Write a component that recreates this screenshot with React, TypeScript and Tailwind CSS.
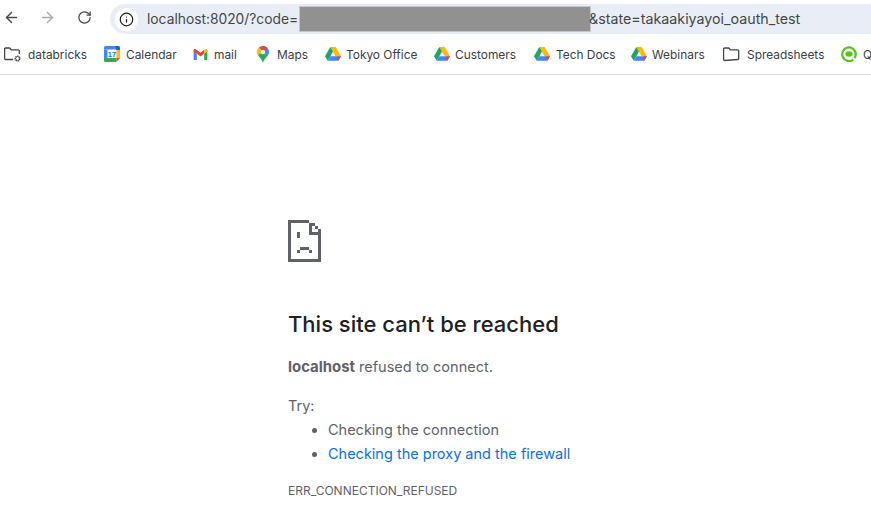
import { ArrowLeft, ArrowRight, Info, RotateCw } from "lucide-react";

const sans = "font-['Inter','Liberation_Sans',sans-serif]";

function DriveIcon() {
  return (
    <svg width="16" height="14" viewBox="0 0 16 14" className="shrink-0">
      <path d="M5.3 0h5.4L16 9.2h-5.400z" fill="#fbbc04" />
      <path d="M5.3 0L8 4.6 2.700 13.800 0 9.200z" fill="#1fa463" />
      <path d="M5.300 9.200H16l-2.700 4.600H2.700z" fill="#4285f4" />
      <path d="M12.800 9.200H16l-2.700 4.600-1.800-2.200z" fill="#ea4335" opacity="0.9" />
    </svg>
  );
}

function FolderIcon({ gear }: { gear?: boolean }) {
  return (
    <svg width="17" height="15" viewBox="0 0 17 15" fill="none" stroke="#444746" strokeWidth="1.3" className="shrink-0">
      <path d={gear ? "M9 12.500H1.600a1 1 0 0 1-1-1V2a1 1 0 0 1 1-1h4l1.700 1.800h7a1 1 0 0 1 1 1V7" : "M1.600 13.500a1 1 0 0 1-1-1V2a1 1 0 0 1 1-1h4l1.700 1.800h7.400a1 1 0 0 1 1 1v7.700a1 1 0 0 1-1 1z"} />
      {gear && <circle cx="13.500" cy="11.500" r="2.200" strokeWidth="1.600" strokeDasharray="1.400 .4" />}
    </svg>
  );
}

function CalendarIcon() {
  return (
    <svg width="16" height="16" viewBox="0 0 16 16" className="shrink-0">
      <rect width="16" height="16" rx="1.500" fill="#fff" />
      <path d="M0 3.500V1.500A1.500 1.500 0 0 1 1.500 0H12v3.500z" fill="#4285f4" />
      <path d="M12 0h2.500A1.500 1.500 0 0 1 16 1.500V4h-4z" fill="#1967d2" />
      <path d="M0 3.500h3.500V12H0z" fill="#4285f4" />
      <path d="M12.500 4H16v8h-3.500z" fill="#fbbc04" />
      <path d="M0 12h12.500v4H1.500A1.500 1.500 0 0 1 0 14.500z" fill="#34a853" />
      <path d="M12.500 12H16l-3.500 4z" fill="#ea4335" />
      <text x="8" y="11" fontSize="7.500" textAnchor="middle" fill="#1a73e8" fontWeight="700" fontFamily="Liberation Sans, sans-serif">17</text>
    </svg>
  );
}

function GmailIcon() {
  return (
    <svg width="15" height="11" viewBox="0 0 15 12" className="shrink-0">
      <path d="M0 1.500v9.300c0 .6.5 1.200 1.100 1.200h2.400V5.200z" fill="#4285f4" />
      <path d="M15 1.500v9.300c0 .6-.5 1.200-1.100 1.200h-2.400V5.200z" fill="#34a853" />
      <path d="M0 1.500C0 .3 1.400-.4 2.400.4L7.500 4.200l4-3v4L7.500 8.200 3.500 5.200 0 2.800z" fill="#ea4335" />
      <path d="M11.500 1.200l1.100-.8c1-.8 2.400-.1 2.400 1.100v1.300l-3.500 2.400z" fill="#fbbc04" />
    </svg>
  );
}

function MapsIcon() {
  return (
    <svg width="12" height="17" viewBox="0 0 12 17" className="shrink-0">
      <path d="M6 0a6 6 0 0 1 6 6c0 1-.3 2-.8 2.900L6 6z" fill="#4285f4" />
      <path d="M1.800 1.700A6 6 0 0 1 6 0a6 6 0 0 1 4.300 1.800L6 6z" fill="#ea4335" />
      <path d="M.8 9A6 6 0 0 1 1.800 1.700L6 6z" fill="#fbbc04" />
      <path d="M.8 9L6 6l5.200 2.900c-1.500 2.600-4.200 4-5.200 8-.9-3.700-3.700-5.400-5.200-7.900z" fill="#34a853" />
      <circle cx="6" cy="6" r="2.200" fill="#fff" />
    </svg>
  );
}

function QIcon() {
  return (
    <svg width="16" height="16" viewBox="0 0 16 16" fill="none" className="shrink-0">
      <path d="M12.200 13.600A6.800 6.800 0 1 1 14.800 8c0 1.500-.5 2.900-1.300 4" stroke="#52c41a" strokeWidth="2.200" />
      <ellipse cx="8" cy="8" rx="3.600" ry="2.700" fill="#52c41a" />
    </svg>
  );
}

function Bookmark({ icon, label, className }: { icon: React.ReactNode; label: string; className: string }) {
  return (
    <div className={`flex items-center shrink-0 ${className}`}>
      {icon}
      <span className="text-[11.9px] text-[#3c4043] whitespace-nowrap">{label}</span>
    </div>
  );
}

function SadTab() {
  // pixel-art page icon, 33px wide
  return (
    <svg width="33" height="42" viewBox="0 0 33 42" fill="#5f6368" shapeRendering="crispEdges" className="mb-[48px]">
      <path d="M0 0h21v3H3v36h27V15h3v27H0z" />
      <path d="M21 3h3v9h9v3H21z" />
      <path d="M24 3h3v3h-3zM27 6h3v3h-3zM30 9h3v3h-3z" />
      <path d="M9 12h3v6H9z" />
      <path d="M12 27h9v3H12zM9 30h3v3H9zM21 30h3v3h-3z" />
    </svg>
  );
}

export default function App() {
  return (
    <div className={`w-[871px] h-[522px] bg-white overflow-hidden ${sans}`}>
      <div className="h-[35px] flex items-center">
        <ArrowLeft size={17} strokeWidth={2} className="ml-[3px] text-[#444746]" />
        <ArrowRight size={17} strokeWidth={2} className="ml-[19px] text-[#a8a9aa]" />
        <RotateCw size={15} strokeWidth={2} className="ml-[21px] text-[#444746]" />
        <div className="ml-[18px] flex-1 h-[30px] mt-[3px] bg-[#e9eef6] rounded-l-full flex items-center">
          <div className="ml-[5px] w-[23px] h-[23px] rounded-full bg-white flex items-center justify-center shrink-0">
            <Info size={15} strokeWidth={2} className="text-[#1f1f1f]" />
          </div>
          <span className="ml-[9px] text-[13.8px] text-[#444746] whitespace-nowrap">localhost:8020/?code=</span>
          <div className="ml-[1px] w-[292px] h-[26px] bg-[#919191] border border-[#c4c7cc] shrink-0" />
          <span className="-ml-[2px] text-[14.25px] text-[#444746] whitespace-nowrap">&amp;state=takaakiyayoi_oauth_test</span>
        </div>
      </div>
      <div className="h-[40px] border-b border-[#dadce0] flex items-center pl-[4px] overflow-hidden">
        <Bookmark icon={<FolderIcon gear />} label="databricks" className="gap-[7px] w-[100px]" />
        <Bookmark icon={<CalendarIcon />} label="Calendar" className="gap-[6px] w-[89px]" />
        <Bookmark icon={<GmailIcon />} label="mail" className="gap-[6px] w-[64px]" />
        <Bookmark icon={<MapsIcon />} label="Maps" className="gap-[8px] w-[68px]" />
        <Bookmark icon={<DriveIcon />} label="Tokyo Office" className="gap-[5px] w-[109px]" />
        <Bookmark icon={<DriveIcon />} label="Customers" className="gap-[5px] w-[100px]" />
        <Bookmark icon={<DriveIcon />} label="Tech Docs" className="gap-[6px] w-[97px]" />
        <Bookmark icon={<DriveIcon />} label="Webinars" className="gap-[5px] w-[92px]" />
        <Bookmark icon={<FolderIcon />} label="Spreadsheets" className="gap-[7px] w-[118px]" />
        <Bookmark icon={<QIcon />} label="Q" className="gap-[6px]" />
      </div>
      <div className="pl-[288px] pt-[145px] flex flex-col items-start">
        <SadTab />
        <h1 className="text-[22px] leading-[28px] font-medium text-[#202124]">This site can’t be reached</h1>
        <p className="mt-[19px] text-[14.5px] leading-[20px] text-[#5f6368]">
          <span className="font-bold text-[14.9px]">localhost</span> refused to connect.
        </p>
        <p className="mt-[19px] text-[14.5px] leading-[20px] text-[#5f6368]">Try:</p>
        <ul className="mt-[2px] pl-[40px] list-disc text-[14.5px] leading-[24px] text-[#5f6368]">
          <li>Checking the connection</li>
          <li className="text-[#0b6fe0] marker:text-[#5f6368]">Checking the proxy and the firewall</li>
        </ul>
        <div className="mt-[17px] text-[12px] leading-[16px] text-[#5f6368]">ERR_CONNECTION_REFUSED</div>
      </div>
    </div>
  );
}
